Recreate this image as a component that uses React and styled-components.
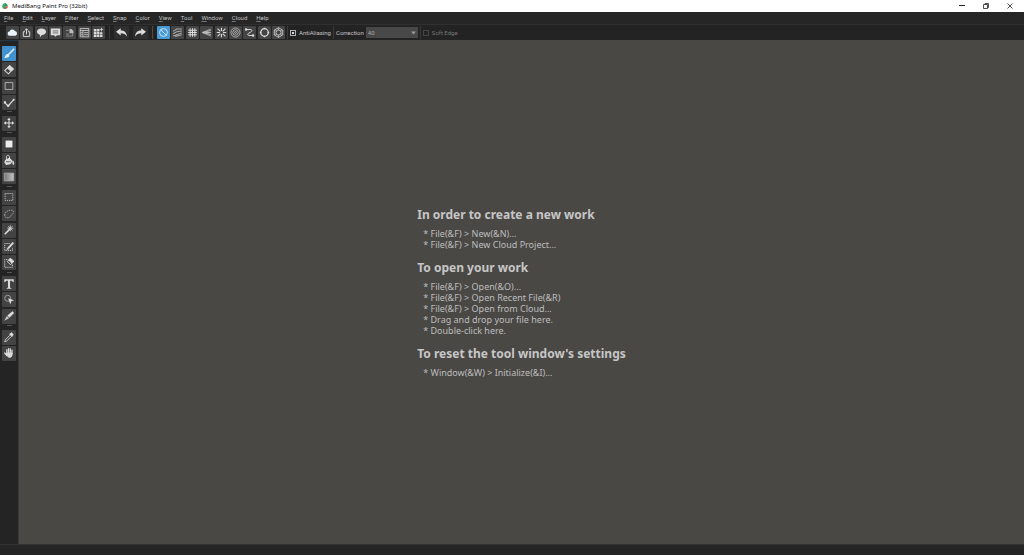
import React from 'react';
import styled, { createGlobalStyle } from 'styled-components';

const GlobalStyle = createGlobalStyle`
  * {
    box-sizing: border-box;
  }

  body {
    margin: 0;
    background: #262626;
    font-family: 'Noto Sans', 'Open Sans', sans-serif;
  }

  button {
    font: inherit;
    color: inherit;
    border: 0;
    padding: 0;
    background: none;
  }
`;

// Styled Components
const Window = styled.div`
  display: flex;
  flex-direction: column;
  height: 100vh;
  user-select: none;
`;

const TitleBar = styled.header`
  display: flex;
  align-items: center;
  flex: none;
  height: 12px;
  padding: 0 10px 0 2px;
  gap: 4px;
  background: #fff;
  color: #111;
`;

const Title = styled.h1`
  flex: 1;
  margin: 0;
  font-size: 6px;
  line-height: 12px;
  font-weight: 400;
`;

const WindowButtons = styled.div`
  display: flex;
  gap: 16px;

  button {
    display: flex;
    width: 8px;
    height: 8px;
  }
`;

const MenuBar = styled.nav`
  display: flex;
  align-items: center;
  flex: none;
  height: 12px;
  padding: 0 4px;
  gap: 9px;
  color: #c4c4c4;
  font-family: Roboto, 'Noto Sans', sans-serif;
  font-size: 6px;
  line-height: 12px;

  u {
    text-decoration-color: #777;
  }
`;

const ToolBar = styled.div`
  display: flex;
  align-items: center;
  flex: none;
  height: 16px;
  padding-left: 6px;
  border-top: 1px solid #303030;
  background: #232323;
  color: #c4c4c4;
  font-family: Roboto, 'Noto Sans', sans-serif;
  font-size: 6px;
`;

const ButtonGroup = styled.div`
  display: flex;
  justify-content: space-between;
  width: ${(props) => props.$width}px;
`;

const ToolButton = styled.button`
  display: flex;
  align-items: center;
  justify-content: center;
  width: ${(props) => (props.$wide ? 15 : 13)}px;
  height: 13px;
  border-radius: 1px;
  background: ${(props) =>
    props.$active ? '#4a9ad6' : props.$wide ? '#2f2f2f' : '#444'};
  color: ${(props) => (props.$active ? '#c9e4f6' : '#dcdcdc')};
`;

const SideButton = styled(ToolButton)`
  flex: none;
  width: 14px;
  height: 15px;
  background: ${(props) => (props.$active ? '#4292d0' : '#434343')};
`;

const Separator = styled.span`
  width: 1px;
  height: 13px;
  margin: 0 ${(props) => props.$space || 2}px;
  background: ${(props) => props.$color || '#3a3a3a'};
`;

const CheckLabel = styled.label`
  display: flex;
  align-items: center;
  gap: 3px;
  color: ${(props) => (props.$dim ? '#777' : 'inherit')};
`;

const CheckBox = styled.input`
  appearance: none;
  display: grid;
  place-items: center;
  width: 6px;
  height: 6px;
  margin: 0;
  border: 1px solid #b0b0b0;

  &:checked::after {
    content: '';
    width: 2px;
    height: 2px;
    background: #ddd;
  }

  &:disabled {
    border-color: #444;
  }
`;

const FieldLabel = styled.label`
  margin-right: 2px;
`;

const SelectBox = styled.div`
  display: grid;
  align-items: center;
  width: 52px;

  > * {
    grid-area: 1 / 1;
  }

  svg {
    justify-self: end;
    margin-right: 2px;
    pointer-events: none;
  }
`;

const Select = styled.select`
  appearance: none;
  width: 100%;
  height: 11px;
  padding: 0 2px;
  border: 0;
  background: #484848;
  color: #a8a8a8;
  font: inherit;
`;

const Workspace = styled.div`
  display: flex;
  flex: 1;
  min-height: 0;
`;

const SideBar = styled.aside`
  flex: none;
  width: 19px;
  padding: 5px 0 0 2px;
  border-top: 1px solid #203850;
  border-right: 1px solid #393939;
  background: #242424;
`;

const SideTools = styled.div`
  display: flex;
  flex-direction: column;
  justify-content: space-between;
  height: 315px;
`;

const SideSeparator = styled.span`
  flex: none;
  width: 5px;
  height: 3px;
  margin-left: 5px;
  border-top: 1px solid #555;
`;

const Canvas = styled.main`
  display: flex;
  flex: 1;
  flex-direction: column;
  align-items: center;
  justify-content: center;
  background: #4a4845;
  color: #bdbdbd;
`;

const Guide = styled.div`
  display: flex;
  flex-direction: column;
  gap: 10px;
`;

const GuideTitle = styled.h2`
  margin: 0 0 5px;
  color: #c6c6c6;
  font-size: 12px;
  line-height: 16px;
  font-weight: 700;
`;

const GuideList = styled.ul`
  margin: 0;
  padding: 0 0 0 6px;
  list-style: none;
  font-size: 9px;
  line-height: 11px;
`;

const StatusBar = styled.footer`
  flex: none;
  height: 11px;
  border-top: 1px solid #333;
  background: #252525;
`;

// Icons, all drawn on a 14x14 grid
const icons = {
  cloud: (
    <path d="M3.5 11a2.600 2.600 0 0 1-.3-5.200 3.800 3.800 0 0 1 7-.6 3 3 0 0 1 .6 5.800z" fill="#eaf3fb" />
  ),
  share: (
    <g fill="none" stroke="currentColor" strokeWidth="1.2">
      <path d="M5 6H3v6h8V6H9M7 9.500V2.500M4.800 4.500 7 2.200l2.200 2.300" />
    </g>
  ),
  bubble: (
    <path d="M7 2c3.500 0 5.800 1.800 5.800 4.200S10.500 10.300 7.500 10.300L5 13v-3C2.700 9.500 1.200 8 1.200 6.200 1.200 3.800 3.500 2 7 2z" fill="currentColor" />
  ),
  message: (
    <g>
      <path d="M1 2h12v8.500H8.800L7 12.500 5.200 10.500H1z" fill="currentColor" />
      <path d="M3.500 5h7M3.500 7.500h7" stroke="#555" />
    </g>
  ),
  page: (
    <g fill="none" stroke="#999">
      <path d="M2.500 4.500h4M2.500 11.500h8.500V6M2.500 9h4" />
      <path d="M7 2.500h2.500L12 5v3H7z" fill="#bbb" stroke="none" />
    </g>
  ),
  panel: (
    <g fill="none" stroke="currentColor">
      <path d="M1.500 2h11v10.500h-11zM1.500 4.500h11M5 5v7M6.500 7.200h5M6.500 9.800h5" />
      <path d="M2 7.200h2.500M2 9.800h2.500" />
    </g>
  ),
  tiles: (
    <g fill="currentColor">
      <path d="M1 2.500h3.500v2.900H1zM5.200 2.500h3v2.900h-3zM1 6.200h3.500v2.900H1zM5.200 6.200h3v2.900h-3zM9 6.800h3v2.300H9zM1 9.900h3.500v2.900H1zM5.200 9.900h3v2.900h-3zM9 9.900h3v2.900H9z" />
      <path d="M10.800 1v4.500M8.600 3.300H13" stroke="currentColor" />
    </g>
  ),
  undo: (
    <path d="M0 6 6 1.500v2.800c4.500 0 7.300 2 8 7.700C12 9 9.500 8 6 8v2.700z" fill="currentColor" />
  ),
  redo: (
    <path d="M14 6 8 1.500v2.800C3.500 4.300.7 6.300 0 12 2 9 4.500 8 8 8v2.700z" fill="currentColor" />
  ),
  off: (
    <g fill="none" stroke="currentColor" strokeWidth="1.200">
      <circle cx="7" cy="7" r="5" />
      <path d="m3.500 3.500 7 7" />
    </g>
  ),
  parallel: (
    <path d="M1.500 5.500 6 2.500h6.500M1.500 8.500 6 6l6.500-1M1.500 11.500 7 9.500l5.500-2M4 12l8.500-2" fill="none" stroke="#aaa" strokeWidth="1.300" />
  ),
  grid: (
    <path d="M4 1.500v11M7 1.500v11M10 1.500v11M1.500 4h11M1.500 7h11M1.500 10h11" fill="none" stroke="currentColor" strokeWidth="1.300" />
  ),
  vanish: (
    <g stroke="#bbb" fill="none">
      <path d="m12.500 2.500-11 4.500 11 4.500" />
      <path d="M2 7h10.500M2 7l10.500-2.500M2 7l10.500 2.500" strokeWidth="1.400" />
    </g>
  ),
  radial: (
    <path d="M7 1v4M7 9v4M1 7h4M9 7h4M2 2l3.500 3.500M8.500 8.500 12 12M12 2 8.500 5.500M5.500 8.500 2 12" stroke="currentColor" strokeWidth="1.400" />
  ),
  rings: (
    <g fill="none" stroke="#c4c4c4">
      <circle cx="7" cy="7" r="5.800" />
      <circle cx="7" cy="7" r="3.500" />
      <circle cx="7" cy="7" r="1.200" />
    </g>
  ),
  curve: (
    <g fill="none" stroke="currentColor" strokeWidth="1.200">
      <path d="M2.500 3.200H8c3 0 2.500 2.300.5 3.300L6 7.800c-1.800 1.200-1.500 3 .5 3H11" />
      <path d="M1.500 2h2.300v2.300H1.500zM10.500 9.700h2.300V12h-2.300z" fill="currentColor" strokeWidth=".4" />
    </g>
  ),
  circle: (
    <g fill="none" stroke="currentColor">
      <circle cx="7" cy="7" r="4.800" strokeWidth="1.600" />
      <path d="M7 1v2M7 11v2M1 7h2M11 7h2" strokeWidth="1.600" />
    </g>
  ),
  hexagon: (
    <g fill="none" stroke="currentColor">
      <path d="M7 .8 12.400 4v6L7 13.200 1.600 10V4z" />
      <circle cx="7" cy="7" r="3.300" />
      <path d="M7 1v3M7 10v3M1.800 4l2.500 1.500M12.200 4 9.700 5.500M1.800 10l2.500-1.500M12.200 10 9.700 8.500" strokeWidth=".7" />
    </g>
  ),
  brush: (
    <g>
      <path d="M12.500 1.500 6.500 7.500" stroke="#e6f2fb" strokeWidth="1.800" strokeLinecap="round" />
      <path d="M6.300 7.200c1.500.8 1.300 2.800-.3 3.600-1.400.8-3.200.6-4.800.9 1.300-.8 1-2 1.900-3.200.8-1.200 2-1.700 3.200-1.300z" fill="#e6f2fb" />
    </g>
  ),
  eraser: (
    <g stroke="currentColor">
      <path d="M7.800 2 12 5.800 6.300 11.500 2 7.700z" fill="none" strokeWidth="1.200" />
      <path d="M7.800 2 12 5.800 9.300 8.500 5 4.700z" fill="currentColor" />
    </g>
  ),
  rect: (
    <path d="M2.500 3h9v8h-9z" fill="none" stroke="#bdbdbd" />
  ),
  check: (
    <g fill="none" stroke="currentColor">
      <path d="m2 6.500 4 4 6.500-7.500" strokeWidth="1.400" />
      <path d="M1 5h2.500v2.500H1zM4.800 9h2.500v2.500H4.800zM11.500 2h2v2h-2z" fill="currentColor" stroke="none" />
    </g>
  ),
  move: (
    <path d="M7 .8 9 3.500H7.600v2.900h2.900V5l2.700 2-2.700 2V7.600H7.600v2.900H9l-2 2.700-2-2.700h1.400V7.600H3.500V9L.8 7l2.700-2v1.400h2.900V3.500H5z" fill="currentColor" />
  ),
  fillRect: (
    <path d="M3 3h8v8H3z" fill="#ececec" />
  ),
  bucket: (
    <g>
      <path d="M2.500 7 7.500 4l4 4.500-3 3.500-5 .8-2-3.300z" fill="currentColor" />
      <path d="M4 7V3.500c0-2.500 3.500-2.500 3.500 0V6" fill="none" stroke="currentColor" />
      <path d="M11.500 7.500c2 2 2 4.500.8 5-1.400.3-1.800-2-.8-5z" fill="currentColor" />
      <path d="M3.500 9h5.500" stroke="#555" />
    </g>
  ),
  gradient: (
    <g>
      <linearGradient id="fade">
        <stop offset="0" stopColor="#777" />
        <stop offset="1" stopColor="#c4c4c4" />
      </linearGradient>
      <path d="M1.500 2.500h11v9h-11z" fill="url(#fade)" stroke="#aaa" />
    </g>
  ),
  marquee: (
    <path d="M2.500 3h9v8h-9z" fill="none" stroke="#c4c4c4" strokeDasharray="1.500 1" />
  ),
  lasso: (
    <path d="M2 8.500C2 5 5 3 8.500 2.500c3-.3 4.500 1.500 3.500 3.500-1 1.800-2.500 1.500-3 3.500-.6 2-7 3.500-7-1z" fill="none" stroke="#b4b4b4" strokeDasharray="1.600 1" />
  ),
  wand: (
    <g stroke="currentColor">
      <path d="m2 12 6-6" strokeWidth="1.800" />
      <path d="M8.500 1.500v7M5 5h7M6 2.500l5 5M11 2.500l-5 5" strokeWidth=".9" />
    </g>
  ),
  selectPen: (
    <g fill="none" stroke="currentColor">
      <path d="M8 3H2v8h9V8" strokeDasharray="1.500 1" />
      <path d="m6 8.500 6-6.500" strokeWidth="2.200" />
      <path d="m4.500 10 2-.5-1.500-1.500z" fill="currentColor" strokeWidth=".5" />
    </g>
  ),
  selectEraser: (
    <g fill="none" stroke="currentColor">
      <path d="M5 3H2v9h9V9" strokeDasharray="1.500 1" />
      <path d="m8.500 1.500 4 3.500-3.500 4-4-3.500z" />
      <path d="m8.500 1.500 4 3.500-2 2.200-4-3.500z" fill="currentColor" />
    </g>
  ),
  text: (
    <path d="M1.500 1.500h11v3.300h-1.200c-.2-1.200-.6-1.600-1.700-1.600H8.200v7.500c0 .6.400.9 1.500.9v.9H4.300v-.9c1.100 0 1.500-.3 1.500-.9V3.200H4.400C3.300 3.200 2.900 3.600 2.700 4.800H1.500z" fill="currentColor" />
  ),
  operate: (
    <g>
      <circle cx="5.500" cy="5" r="3.500" fill="none" stroke="#aaa" />
      <path d="m6 5 7 2.300-3 1L8.500 12z" fill="currentColor" />
    </g>
  ),
  divide: (
    <g>
      <path d="M11 1.500 13 3.500 7.500 9 5 6.500z" fill="currentColor" />
      <path d="M4.500 7 7 9.500 1.500 12.500z" fill="#ccc" />
    </g>
  ),
  dropper: (
    <g>
      <path d="m8 5-5.500 5.500-.5 2 2-.5L9.500 6.500" fill="none" stroke="currentColor" />
      <path d="m7 3.500 1.200-.5L10 1.500l2.500 2.500L11 6l-.5 1.200z" fill="currentColor" />
    </g>
  ),
  hand: (
    <g fill="none" stroke="currentColor" strokeWidth="1.500" strokeLinecap="round">
      <path d="M4.500 8V3.200M6.500 7V2M8.500 7V2.200M10.500 8V3.700M2 7l2.500 3" />
      <path d="M4.500 7h6v2.500c0 1-1 2.500-2 2.500H6.500L4.500 9.500z" fill="currentColor" strokeWidth="1" />
    </g>
  )
};

function Icon({ name, size = 11 }) {
  return (
    <svg width={size} height={size} viewBox="0 0 14 14" aria-hidden="true">
      {icons[name]}
    </svg>
  );
}

const menus = [
  'File',
  'Edit',
  'Layer',
  'Filter',
  'Select',
  'Snap',
  'Color',
  'View',
  'Tool',
  'Window',
  'Cloud',
  'Help'
];

const fileTools = ['cloud', 'share', 'bubble', 'message', 'page', 'panel', 'tiles'];

const snapTools = [
  'off',
  'parallel',
  'grid',
  'vanish',
  'radial',
  'rings',
  'curve',
  'circle',
  'hexagon'
];

const sideTools = [
  'brush',
  'eraser',
  'rect',
  'check',
  'divider',
  'move',
  'divider',
  'fillRect',
  'bucket',
  'gradient',
  'divider',
  'marquee',
  'lasso',
  'wand',
  'selectPen',
  'selectEraser',
  'divider',
  'text',
  'operate',
  'divide',
  'divider',
  'dropper',
  'hand'
];

const guides = [
  {
    title: 'In order to create a new work',
    items: ['File(&F) > New(&N)...', 'File(&F) > New Cloud Project...']
  },
  {
    title: 'To open your work',
    items: [
      'File(&F) > Open(&O)...',
      'File(&F) > Open Recent File(&R)',
      'File(&F) > Open from Cloud...',
      'Drag and drop your file here.',
      'Double-click here.'
    ]
  },
  {
    title: "To reset the tool window's settings",
    items: ['Window(&W) > Initialize(&I)...']
  }
];

function Logo() {
  return (
    <svg width="6" height="8" viewBox="0 0 6 8" aria-hidden="true">
      <path d="M3 1C1 1.500 0 3 .2 4.700.5 6.300 1.600 7 3 7z" fill="#2fae6a" />
      <path d="M3 1c1.800.5 2.900 2 2.800 3.500H3z" fill="#3c8f5c" />
      <path d="M3 4.500h2.800C5.700 6 4.700 7 3 7z" fill="#e0463e" />
    </svg>
  );
}

export default function App() {
  const [tool, setTool] = React.useState('brush');
  const [snap, setSnap] = React.useState('off');

  return (
    <Window>
      <GlobalStyle />
      <TitleBar>
        <Logo />
        <Title>MediBang Paint Pro (32bit)</Title>
        <WindowButtons>
          <button aria-label="Minimize">
            <svg width="8" height="8" viewBox="0 0 8 8">
              <path d="M1 3.500h6" stroke="#222" />
            </svg>
          </button>
          <button aria-label="Restore">
            <svg width="8" height="8" viewBox="0 0 8 8">
              <path d="M1.500 2.500h4v4h-4zM3 2.500v-1h3.500v4h-1" fill="none" stroke="#222" strokeWidth=".8" />
            </svg>
          </button>
          <button aria-label="Close">
            <svg width="8" height="8" viewBox="0 0 8 8">
              <path d="m1.500 1.500 5 5M6.500 1.500l-5 5" stroke="#222" strokeWidth=".8" />
            </svg>
          </button>
        </WindowButtons>
      </TitleBar>

      <MenuBar>
        {menus.map((menu) => (
          <button key={menu}>
            <u>{menu[0]}</u>
            {menu.slice(1)}
          </button>
        ))}
      </MenuBar>

      <ToolBar>
        <ButtonGroup $width={99}>
          {fileTools.map((name) => (
            <ToolButton key={name} aria-label={name}>
              <Icon name={name} />
            </ToolButton>
          ))}
        </ButtonGroup>
        <Separator $space={4} />
        <ButtonGroup $width={34}>
          <ToolButton $wide aria-label="undo">
            <Icon name="undo" />
          </ToolButton>
          <ToolButton $wide aria-label="redo">
            <Icon name="redo" />
          </ToolButton>
        </ButtonGroup>
        <Separator $space={4} $color="#5a4a3a" />
        <ButtonGroup $width={128}>
          {snapTools.map((name) => (
            <ToolButton
              key={name}
              aria-label={name}
              $active={name === snap}
              onClick={() => setSnap(name)}
            >
              <Icon name={name} />
            </ToolButton>
          ))}
        </ButtonGroup>
        <Separator />
        <CheckLabel>
          <CheckBox type="checkbox" defaultChecked />
          AntiAliasing
        </CheckLabel>
        <Separator />
        <FieldLabel htmlFor="correction">Correction</FieldLabel>
        <SelectBox>
          <Select id="correction" defaultValue="40">
            <option>40</option>
          </Select>
          <svg width="5" height="4" viewBox="0 0 5 4">
            <path d="M0 .5h5L2.500 3.500z" fill="#999" />
          </svg>
        </SelectBox>
        <Separator />
        <CheckLabel $dim>
          <CheckBox type="checkbox" disabled />
          Soft Edge
        </CheckLabel>
      </ToolBar>

      <Workspace>
        <SideBar>
          <SideTools>
            {sideTools.map((name, index) =>
              name === 'divider' ? (
                <SideSeparator key={`${name}${index}`} />
              ) : (
                <SideButton
                  key={name}
                  aria-label={name}
                  $active={name === tool}
                  onClick={() => setTool(name)}
                >
                  <Icon name={name} size={12} />
                </SideButton>
              )
            )}
          </SideTools>
        </SideBar>
        <Canvas>
          <Guide>
            {guides.map((guide) => (
              <section key={guide.title}>
                <GuideTitle>{guide.title}</GuideTitle>
                <GuideList>
                  {guide.items.map((item) => (
                    <li key={item}>* {item}</li>
                  ))}
                </GuideList>
              </section>
            ))}
          </Guide>
        </Canvas>
      </Workspace>
      <StatusBar />
    </Window>
  );
}
